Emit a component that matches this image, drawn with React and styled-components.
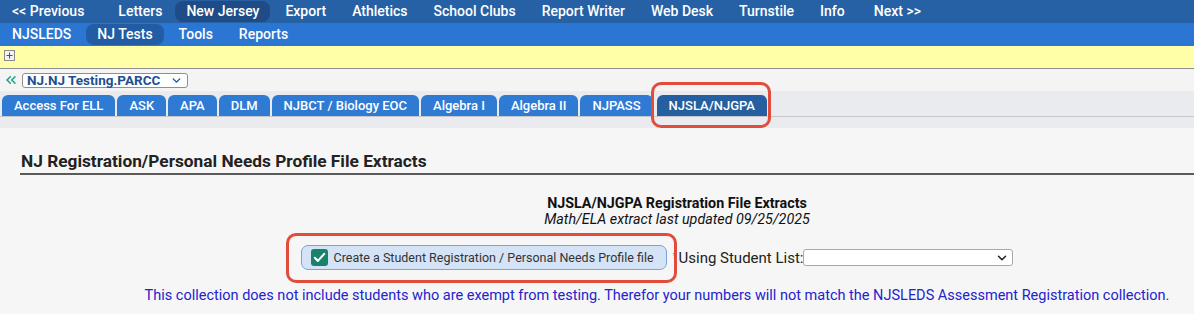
import React from "react";
import styled, { createGlobalStyle } from "styled-components";
import { ChevronDown, ChevronsLeft } from "lucide-react";

const topItems = [
  "<< Previous",
  "Letters",
  "New Jersey",
  "Export",
  "Athletics",
  "School Clubs",
  "Report Writer",
  "Web Desk",
  "Turnstile",
  "Info",
  "Next >>",
];
const subItems = ["NJSLEDS", "NJ Tests", "Tools", "Reports"];
const tabs = [
  "Access For ELL",
  "ASK",
  "APA",
  "DLM",
  "NJBCT / Biology EOC",
  "Algebra I",
  "Algebra II",
  "NJPASS",
  "NJSLA/NJGPA",
];

export default function App() {
  return (
    <Page>
      <GlobalStyle />
      <TopNav>
        {topItems.map((t) => (
          <TopItem key={t} $active={t === "New Jersey"} $pill="#1f4c86">
            {t}
          </TopItem>
        ))}
      </TopNav>
      <SubNav>
        {subItems.map((t) => (
          <NavItem key={t} $active={t === "NJ Tests"} $pill="#225ca4">
            {t}
          </NavItem>
        ))}
      </SubNav>
      <InfoBar>
        <svg width="11" height="11" viewBox="0 0 11 11">
          <rect x="0.5" y="0.5" width="10" height="10" fill="#f2f2f2" stroke="#8a8a8a" />
          <path d="M5.5 2.5v6M2.5 5.5h6" stroke="#555" strokeWidth="1" />
        </svg>
      </InfoBar>
      <SelectorRow>
        <ChevronsLeft size={16} color="#1b9e86" strokeWidth={2.2} />
        <ProgramSelect>
          <span>NJ.NJ Testing.PARCC</span>
          <ChevronDown size={13} color="#1d4f8f" strokeWidth={2.5} />
        </ProgramSelect>
      </SelectorRow>
      <TabStrip>
        {tabs.map((t) =>
          t === "NJSLA/NJGPA" ? (
            <Marked key={t} $inset="-13px -4px -12px -4px">
              <Tab $active>{t}</Tab>
            </Marked>
          ) : (
            <Tab key={t}>{t}</Tab>
          )
        )}
      </TabStrip>
      <Gutter />
      <Panel>
        <Heading>NJ Registration/Personal Needs Profile File Extracts</Heading>
        <Body>
          <TitleBlock>
            <strong>NJSLA/NJGPA Registration File Extracts</strong>
            <em>Math/ELA extract last updated 09/25/2025</em>
          </TitleBlock>
          <ActionRow>
            <Marked $inset="-12px -10px -13px -15px">
              <CreateButton>
                <CheckIcon viewBox="0 0 17 17">
                  <rect width="17" height="17" rx="3" fill="#17836a" />
                  <path d="M3.8 8.8l3.1 3.1 6.3-7" fill="none" stroke="#fff" strokeWidth="2.1" strokeLinecap="round" strokeLinejoin="round" />
                </CheckIcon>
                Create a Student Registration / Personal Needs Profile file
              </CreateButton>
            </Marked>
            <Asterisk>*</Asterisk>
            <FieldLabel>Using Student List:</FieldLabel>
            <ListSelect>
              <ChevronDown size={14} color="#222" strokeWidth={2.6} />
            </ListSelect>
          </ActionRow>
          <Notice>
            This collection does not include students who are exempt from testing. Therefor your
            numbers will not match the NJSLEDS Assessment Registration collection.
          </Notice>
        </Body>
      </Panel>
    </Page>
  );
}

const GlobalStyle = createGlobalStyle`
  body {
    margin: 0;
    background: #f6f6f6;
    font-family: Roboto, "Liberation Sans", sans-serif;
  }
`;

const Page = styled.div`
  width: 1194px;
  height: 314px;
  overflow: hidden;
  background: #f6f6f6;
`;

const TopNav = styled.div`
  height: 23px;
  background: #2761a5;
  display: flex;
  align-items: center;
  padding-left: 1px;
  gap: 4px;
`;

const SubNav = styled(TopNav)`
  background: #2b76d2;
`;

const NavItem = styled.span`
  color: #fff;
  font-size: 14px;
  font-weight: 500;
  line-height: 19px;
  padding: 1px 11px;
  border-radius: 8px;
  white-space: nowrap;
  background: ${(p) => (p.$active ? p.$pill : "transparent")};
`;

const TopItem = styled(NavItem)`
  &:first-child {
    margin-right: 8px;
  }
  &:nth-child(2) {
    margin-right: -2px;
  }
  &:last-child {
    margin-left: 3px;
  }
`;

const InfoBar = styled.div`
  height: 23px;
  box-sizing: border-box;
  background: #ffffa8;
  border-bottom: 1px solid #8d8d8d;
  padding: 4px 0 0 4px;
  svg {
    display: block;
  }
`;

const SelectorRow = styled.div`
  height: 22px;
  background: #f4f4f4;
  display: flex;
  align-items: center;
  gap: 3px;
  padding-left: 3px;
`;

const ProgramSelect = styled.div`
  width: 166px;
  height: 15px;
  box-sizing: border-box;
  border: 1px solid #8f8f8f;
  border-radius: 3px;
  background: #fff;
  display: flex;
  align-items: center;
  justify-content: space-between;
  padding: 0 4px;
  font-size: 13.5px;
  line-height: 13px;
  font-weight: 700;
  color: #1d4f8f;
`;

const TabStrip = styled.div`
  background: #e9ebee;
  display: flex;
  align-items: flex-end;
  gap: 2px;
  padding: 4px 0 0 2px;
  border-bottom: 1px solid #c6c8cc;
`;

const Tab = styled.div`
  height: 21px;
  padding: 0 12px;
  display: flex;
  align-items: center;
  border-radius: 6px 6px 0 0;
  background: ${(p) => (p.$active ? "#255f9f" : "#2f7bd4")};
  color: #fff;
  font-size: 13px;
  font-weight: 500;
  white-space: nowrap;
  margin-left: ${(p) => (p.$active ? "2px" : "0")};
`;

const Marked = styled.span`
  position: relative;
  display: inline-flex;
  &::after {
    content: "";
    position: absolute;
    inset: ${(p) => p.$inset};
    border: 3px solid #e24c3b;
    border-radius: 10px;
    pointer-events: none;
  }
`;

const Gutter = styled.div`
  height: 11px;
  background: #e9ebee;
`;

const Panel = styled.div`
  background: #f6f6f6;
  border-top-left-radius: 8px;
  padding: 23px 0 0 20px;
`;

const Heading = styled.h2`
  margin: 0;
  padding: 0 0 1px 1px;
  font-size: 17.3px;
  font-weight: 700;
  line-height: 21px;
  color: #222;
  border-bottom: 2px solid #5a5a5a;
`;

const Body = styled.div`
  padding-left: 100px;
  display: flex;
  flex-direction: column;
  align-items: center;
`;

const TitleBlock = styled.div`
  margin-top: 20px;
  padding-left: 40px;
  display: flex;
  flex-direction: column;
  align-items: center;
  font-size: 14.3px;
  line-height: 16px;
  color: #111;
  strong {
    font-weight: 700;
  }
`;

const ActionRow = styled.div`
  margin-top: 18px;
  display: flex;
  align-items: center;
`;

const CreateButton = styled.button`
  height: 25px;
  box-sizing: border-box;
  display: flex;
  align-items: center;
  gap: 6px;
  padding: 0 12px 0 9px;
  background: #d5e3f6;
  border: 1px solid #79a5dc;
  border-radius: 7px;
  font-family: Roboto, "Liberation Sans", sans-serif;
  font-size: 12.5px;
  color: #333;
`;

const CheckIcon = styled.svg`
  width: 17px;
  height: 17px;
`;

const Asterisk = styled.span`
  margin: 0 2px 0 6px;
  font-size: 9px;
  color: #9a6a5a;
  align-self: flex-start;
  padding-top: 6px;
`;

const FieldLabel = styled.span`
  font-size: 15px;
  color: #222;
`;

const ListSelect = styled.div`
  width: 210px;
  height: 17px;
  box-sizing: border-box;
  border: 1px solid #a8a8a8;
  border-radius: 3px;
  background: #fff;
  display: flex;
  align-items: center;
  justify-content: flex-end;
  padding-right: 3px;
`;

const Notice = styled.p`
  margin: 17px 0 0;
  font-size: 14.5px;
  color: #2323cf;
  white-space: nowrap;
`;
